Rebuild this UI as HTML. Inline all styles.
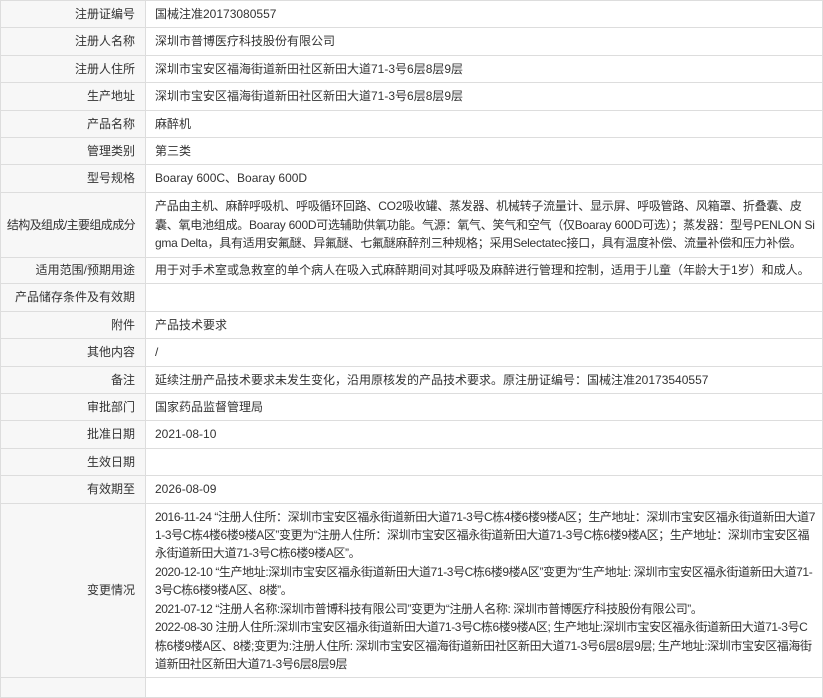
<!DOCTYPE html>
<html><head><meta charset="utf-8"><style>
body{margin:0;background:#fff;font-family:"Liberation Sans","Noto Sans CJK SC",sans-serif;font-size:12px;color:#333;}
table{border-collapse:collapse;width:823px;table-layout:fixed;position:absolute;left:0;top:0;}
td{border:1px solid #ddd;padding:0 4px 0 9px;vertical-align:middle;line-height:18.4px;word-break:break-all;}
td.l{background:#f7f7f7;text-align:right;width:125px;padding-right:10px;white-space:nowrap;padding-left:0;}
.c{letter-spacing:-0.4px;}
</style></head><body>
<table>
<colgroup><col style="width:145px"><col></colgroup>
<tr style="height:27px"><td class="l">注册证编号</td><td>国械注准20173080557</td></tr>
<tr style="height:28px"><td class="l">注册人名称</td><td>深圳市普博医疗科技股份有限公司</td></tr>
<tr style="height:27px"><td class="l">注册人住所</td><td>深圳市宝安区福海街道新田社区新田大道71-3号6层8层9层</td></tr>
<tr style="height:28px"><td class="l">生产地址</td><td>深圳市宝安区福海街道新田社区新田大道71-3号6层8层9层</td></tr>
<tr style="height:27px"><td class="l">产品名称</td><td>麻醉机</td></tr>
<tr style="height:27px"><td class="l">管理类别</td><td>第三类</td></tr>
<tr style="height:28px"><td class="l">型号规格</td><td>Boaray 600C、Boaray 600D</td></tr>
<tr style="height:65px"><td class="l" style="letter-spacing:-0.6px">结构及组成/主要组成成分</td><td style="letter-spacing:-0.25px">产品由主机、麻醉呼吸机、呼吸循环回路、CO2吸收罐、蒸发器、机械转子流量计、显示屏、呼吸管路、风箱罩、折叠囊、皮囊、氧电池组成。Boaray 600D可选辅助供氧功能。气源：氧气、笑气和空气（仅Boaray 600D可选）；蒸发器：型号PENLON Sigma Delta，具有适用安氟醚、异氟醚、七氟醚麻醉剂三种规格；采用Selectatec接口，具有温度补偿、流量补偿和压力补偿。</td></tr>
<tr style="height:26px"><td class="l">适用范围/预期用途</td><td>用于对手术室或急救室的单个病人在吸入式麻醉期间对其呼吸及麻醉进行管理和控制，适用于儿童（年龄大于1岁）和成人。</td></tr>
<tr style="height:28px"><td class="l">产品储存条件及有效期</td><td></td></tr>
<tr style="height:27px"><td class="l">附件</td><td>产品技术要求</td></tr>
<tr style="height:28px"><td class="l">其他内容</td><td>/</td></tr>
<tr style="height:27px"><td class="l">备注</td><td>延续注册产品技术要求未发生变化，沿用原核发的产品技术要求。原注册证编号：国械注准20173540557</td></tr>
<tr style="height:27px"><td class="l">审批部门</td><td>国家药品监督管理局</td></tr>
<tr style="height:28px"><td class="l">批准日期</td><td>2021-08-10</td></tr>
<tr style="height:27px"><td class="l">生效日期</td><td></td></tr>
<tr style="height:28px"><td class="l">有效期至</td><td>2026-08-09</td></tr>
<tr style="height:174px"><td class="l">变更情况</td><td class="c">2016-11-24 “注册人住所：深圳市宝安区福永街道新田大道71-3号C栋4楼6楼9楼A区；生产地址：深圳市宝安区福永街道新田大道71-3号C栋4楼6楼9楼A区”变更为“注册人住所：深圳市宝安区福永街道新田大道71-3号C栋6楼9楼A区；生产地址：深圳市宝安区福永街道新田大道71-3号C栋6楼9楼A区”。<br>2020-12-10 “生产地址:深圳市宝安区福永街道新田大道71-3号C栋6楼9楼A区”变更为“生产地址: 深圳市宝安区福永街道新田大道71-3号C栋6楼9楼A区、8楼”。<br>2021-07-12 “注册人名称:深圳市普博科技有限公司”变更为“注册人名称: 深圳市普博医疗科技股份有限公司”。<br>2022-08-30 注册人住所:深圳市宝安区福永街道新田大道71-3号C栋6楼9楼A区; 生产地址:深圳市宝安区福永街道新田大道71-3号C栋6楼9楼A区、8楼;变更为:注册人住所: 深圳市宝安区福海街道新田社区新田大道71-3号6层8层9层; 生产地址:深圳市宝安区福海街道新田社区新田大道71-3号6层8层9层</td></tr>
<tr style="height:20px"><td class="l"></td><td></td></tr>
</table>
</body></html>
